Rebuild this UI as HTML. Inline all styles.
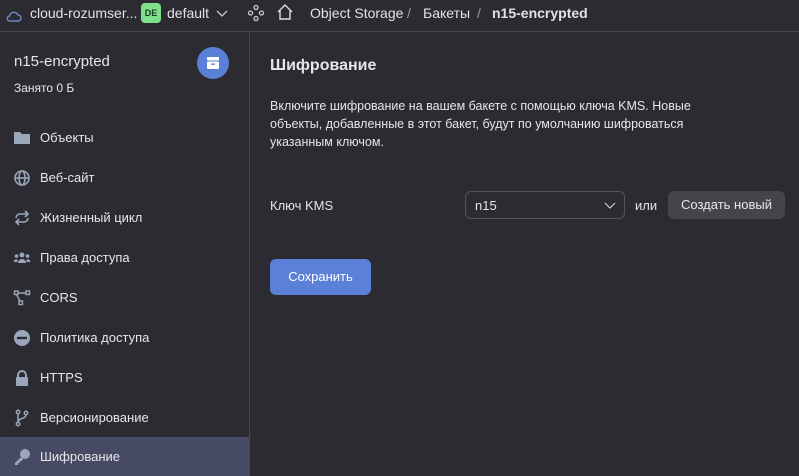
<!DOCTYPE html>
<html><head><meta charset="utf-8"><style>
*{margin:0;padding:0;box-sizing:border-box}
body{width:799px;height:476px;background:#2c2b31;font-family:"Liberation Sans","DejaVu Sans",sans-serif;color:#e6e6ea;overflow:hidden;position:relative;font-size:13px}
.top{position:absolute;left:0;top:0;width:799px;height:32px;border-bottom:1px solid #46454c}
.t{position:absolute;top:5px;font-size:14px;color:#e2e2e6;white-space:nowrap}
.side{position:absolute;left:0;top:33px;width:250px;height:443px;border-right:1px solid #46454c}
.item{position:absolute;left:0;width:249px;height:40px;font-size:13px;color:#e6e6ea}
.item span{position:absolute;left:40px;top:12px}
.item svg{position:absolute;left:13px;top:11px}
.act{background:#464a63}
</style></head><body>
<div class="top">
<svg style="position:absolute;left:6px;top:9px" width="16" height="14" viewBox="0 0 16 14"><path d="M4 12h8a3 3 0 0 0 0-6 4.5 4.5 0 0 0-8.5 1A2.5 2.5 0 0 0 4 12z" fill="none" stroke="#6e87c9" stroke-width="1.4"/></svg>
<div class="t" style="left:30px">cloud-rozumser...</div>
<div style="position:absolute;left:141px;top:3px;width:20px;height:20px;background:#7ee08b;border-radius:4px;color:#1d3a20;font-size:9px;font-weight:bold;text-align:center;line-height:20px">DE</div>
<div class="t" style="left:167px">default</div>
<svg style="position:absolute;left:216px;top:10px" width="12" height="8"><path d="M1 1l5 5 5-5" fill="none" stroke="#ccc" stroke-width="1.3"/></svg>
<svg style="position:absolute;left:247px;top:4px" width="18" height="18" viewBox="0 0 18 18" fill="none" stroke="#ccc" stroke-width="1.3"><circle cx="9" cy="3.5" r="2"/><circle cx="3.5" cy="9" r="2"/><circle cx="14.5" cy="9" r="2"/><circle cx="9" cy="14.5" r="2"/></svg>
<svg style="position:absolute;left:276px;top:3px" width="18" height="18" viewBox="0 0 18 18"><path d="M2 9L9 2l7 7M4 7.5V16h10V7.5" fill="none" stroke="#ddd" stroke-width="1.4"/></svg>
<div class="t" style="left:310px">Object Storage</div>
<div class="t" style="left:407px;color:#999">/</div>
<div class="t" style="left:423px">Бакеты</div>
<div class="t" style="left:477px;color:#999">/</div>
<div class="t" style="left:492px;font-weight:bold">n15-encrypted</div>
</div>
<div class="side">
<div style="position:absolute;left:14px;top:20px;font-size:15px">n15-encrypted</div>
<div style="position:absolute;left:14px;top:48px;font-size:12px">Занято 0 Б</div>
<div style="position:absolute;left:197px;top:14px;width:32px;height:32px;border-radius:50%;background:#5a7fd6"><svg style="position:absolute;left:9px;top:9px" width="14" height="14" viewBox="0 0 14 14" fill="#fff"><rect x="1" y="1" width="12" height="3.5" rx="1"/><rect x="1" y="5.5" width="12" height="7.5" rx="1"/><rect x="5" y="7.5" width="4" height="1.3" fill="#5a7fd6"/></svg></div>
<div class="item" style="top:85px"><svg width="18" height="18" viewBox="0 0 18 18"><path d="M1 3h6l2 2h8v10H1z" fill="#9aa6ba"/></svg><span>Объекты</span></div>
<div class="item" style="top:125px"><svg width="18" height="18" viewBox="0 0 18 18" fill="none" stroke="#9aa6ba" stroke-width="1.6"><circle cx="9" cy="9" r="7"/><ellipse cx="9" cy="9" rx="3" ry="7"/><path d="M2 9h14"/></svg><span>Веб-сайт</span></div>
<div class="item" style="top:165px"><svg width="18" height="18" viewBox="0 0 18 18" fill="none" stroke="#9aa6ba" stroke-width="1.6"><path d="M3 9a4 4 0 0 1 4-4h8M12 2l3 3-3 3M15 9a4 4 0 0 1-4 4H3M6 16l-3-3 3-3"/></svg><span>Жизненный цикл</span></div>
<div class="item" style="top:205px"><svg width="18" height="18" viewBox="0 0 18 18" fill="#9aa6ba"><circle cx="9" cy="6" r="2.5"/><circle cx="3.5" cy="7" r="1.8"/><circle cx="14.5" cy="7" r="1.8"/><path d="M5 14a4 4 0 0 1 8 0zM0.5 13a3 3 0 0 1 4-2.5V13zM17.5 13a3 3 0 0 0-4-2.5V13z"/></svg><span>Права доступа</span></div>
<div class="item" style="top:245px"><svg width="18" height="18" viewBox="0 0 18 18" fill="none" stroke="#9aa6ba" stroke-width="1.4"><rect x="1.5" y="2" width="3.5" height="3.5"/><rect x="13" y="2" width="3.5" height="3.5"/><rect x="6" y="12" width="3.5" height="3.5"/><path d="M5 4h8M3.5 5.5L7 12"/></svg><span>CORS</span></div>
<div class="item" style="top:285px"><svg width="18" height="18" viewBox="0 0 18 18"><circle cx="9" cy="9" r="8" fill="#9aa6ba"/><rect x="4" y="7.8" width="10" height="2.4" fill="#2c2b31"/></svg><span>Политика доступа</span></div>
<div class="item" style="top:325px"><svg width="18" height="18" viewBox="0 0 18 18"><path d="M5 8V6a4 4 0 0 1 8 0v2" fill="none" stroke="#9aa6ba" stroke-width="2"/><rect x="3" y="8" width="12" height="9" rx="1" fill="#9aa6ba"/></svg><span>HTTPS</span></div>
<div class="item" style="top:365px"><svg width="18" height="18" viewBox="0 0 18 18" fill="none" stroke="#9aa6ba" stroke-width="1.5"><circle cx="5" cy="3" r="1.7"/><circle cx="5" cy="15" r="1.7"/><circle cx="13" cy="4" r="1.7"/><path d="M5 5v8M13 6c0 4-8 3-8 7"/></svg><span>Версионирование</span></div>
<div class="item act" style="top:404px;height:39px"><svg width="18" height="18" viewBox="0 0 18 18" fill="#9aa6ba"><circle cx="12" cy="6" r="5"/><path d="M8 9l-6 6v2h3v-2h2v-2h2l1-2z"/></svg><span>Шифрование</span></div>
</div>
<div style="position:absolute;left:270px;top:57px;font-size:16px;font-weight:bold">Шифрование</div>
<div style="position:absolute;left:270px;top:97px;width:440px;font-size:12.5px;line-height:18px">Включите шифрование на вашем бакете с помощью ключа KMS. Новые объекты, добавленные в этот бакет, будут по умолчанию шифроваться указанным ключом.</div>
<div style="position:absolute;left:270px;top:198px">Ключ KMS</div>
<div style="position:absolute;left:465px;top:191px;width:160px;height:28px;border:1px solid #55545b;border-radius:6px"><span style="position:absolute;left:9px;top:6px">n15</span><svg style="position:absolute;left:138px;top:10px" width="12" height="8"><path d="M1 1l5 5 5-5" fill="none" stroke="#ccc" stroke-width="1.2"/></svg></div>
<div style="position:absolute;left:635px;top:198px">или</div>
<div style="position:absolute;left:668px;top:191px;width:117px;height:28px;background:#45444b;border-radius:6px;text-align:center;line-height:28px">Создать новый</div>
<div style="position:absolute;left:270px;top:259px;width:101px;height:36px;background:#5b80d8;border-radius:6px;text-align:center;line-height:36px;color:#fff">Сохранить</div>
</body></html>
